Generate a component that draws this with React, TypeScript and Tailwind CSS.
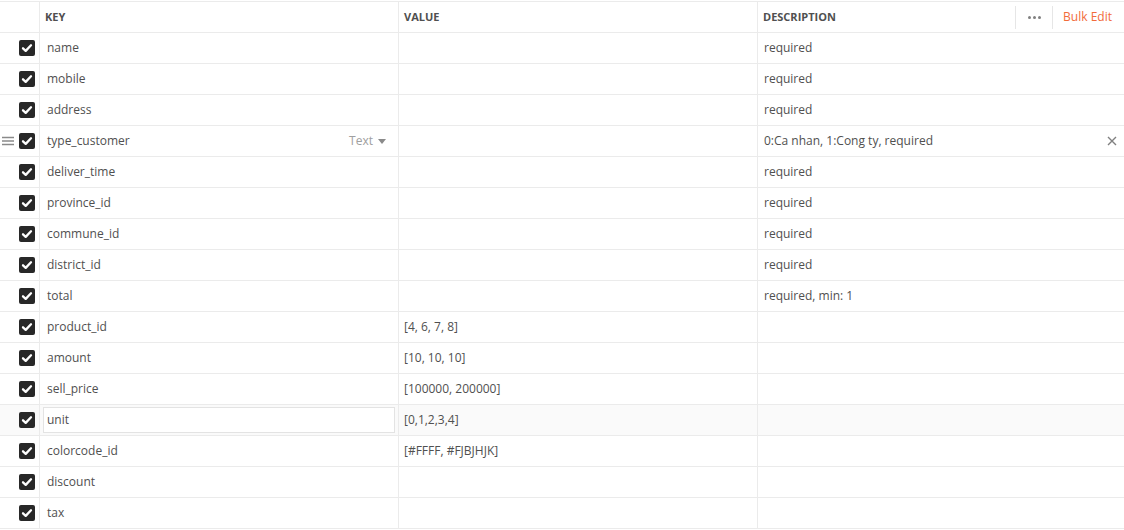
const rows = [
  { key: "name", value: "", desc: "required" },
  { key: "mobile", value: "", desc: "required" },
  { key: "address", value: "", desc: "required" },
  { key: "type_customer", value: "", desc: "0:Ca nhan, 1:Cong ty, required", hover: true },
  { key: "deliver_time", value: "", desc: "required" },
  { key: "province_id", value: "", desc: "required" },
  { key: "commune_id", value: "", desc: "required" },
  { key: "district_id", value: "", desc: "required" },
  { key: "total", value: "", desc: "required, min: 1" },
  { key: "product_id", value: "[4, 6, 7, 8]", desc: "" },
  { key: "amount", value: "[10, 10, 10]", desc: "" },
  { key: "sell_price", value: "[100000, 200000]", desc: "" },
  { key: "unit", value: "[0,1,2,3,4]", desc: "", focus: true },
  { key: "colorcode_id", value: "[#FFFF, #FJBJHJK]", desc: "" },
  { key: "discount", value: "", desc: "" },
  { key: "tax", value: "", desc: "" },
];

function Checkbox() {
  return (
    <div className="w-4 h-4 rounded-[2px] bg-[#282828] flex items-center justify-center">
      <svg width="14" height="14" viewBox="0 0 14 14" fill="none">
        <path d="M3 7.3l2.7 2.6 5.3-5.6" stroke="white" strokeWidth="2.3" strokeLinecap="round" strokeLinejoin="round" />
      </svg>
    </div>
  );
}

export default function App() {
  return (
    <div
      className="w-[1124px] h-[530px] bg-white text-[12px] text-[#505050] overflow-hidden"
      style={{ fontFamily: '"Open Sans", "Noto Sans", sans-serif' }}
    >
      <div className="mt-px border-t border-[#ebebeb]">
        {/* header */}
        <div className="grid grid-cols-[40px_359px_359px_1fr] h-[31px] border-b border-[#ebebeb] text-[11px] font-bold text-[#505050]">
          <div className="border-r border-[#ebebeb]" />
          <div className="border-r border-[#ebebeb] flex items-center pl-[5px]">KEY</div>
          <div className="border-r border-[#ebebeb] flex items-center pl-[5px]">VALUE</div>
          <div className="flex items-center pl-[5px]">
            <span className="flex-1">DESCRIPTION</span>
            <div className="flex items-center h-[23px]">
              <div className="h-full border-l border-[#e6e6e6]" />
              <div className="w-[36px] flex items-center justify-center gap-[2px]">
                <span className="w-[3px] h-[3px] rounded-full bg-[#808080]" />
                <span className="w-[3px] h-[3px] rounded-full bg-[#808080]" />
                <span className="w-[3px] h-[3px] rounded-full bg-[#808080]" />
              </div>
              <div className="h-full border-l border-[#e6e6e6]" />
              <span className="pl-[10px] pr-[12px] text-[12px] font-normal text-[#f26b3a]">Bulk Edit</span>
            </div>
          </div>
        </div>
        {rows.map((r) => (
          <div
            key={r.key}
            className={`grid grid-cols-[40px_359px_359px_1fr] h-[31px] border-b border-[#ebebeb] ${r.focus ? "bg-[#fafafa]" : ""}`}
          >
            <div className="border-r border-[#ebebeb] flex items-center justify-end pr-[4px] relative">
              {r.hover && (
                <svg className="absolute left-[2px] top-[10px]" width="12" height="10" viewBox="0 0 12 10">
                  <path d="M0 1.5h12M0 5h12M0 8.5h12" stroke="#8a8a8a" strokeWidth="1.3" />
                </svg>
              )}
              <Checkbox />
            </div>
            <div className="border-r border-[#ebebeb] flex items-center">
              {r.focus ? (
                <div className="mx-[3px] w-full h-[26px] border border-[#e3e3e3] bg-white flex items-center pl-[3px]">
                  {r.key}
                </div>
              ) : (
                <div className="flex items-center w-full pl-[7px] pr-[12px]">
                  <span className="flex-1">{r.key}</span>
                  {r.hover && (
                    <span className="flex items-center gap-[5px] text-[#a0a0a0]">
                      Text
                      <svg width="8" height="5" viewBox="0 0 8 5">
                        <path d="M0 0h8L4 5z" fill="#8a8a8a" />
                      </svg>
                    </span>
                  )}
                </div>
              )}
            </div>
            <div className="border-r border-[#ebebeb] flex items-center pl-[5px]">{r.value}</div>
            <div className="flex items-center pl-[6px] pr-[7px]">
              <span className="flex-1">{r.desc}</span>
              {r.hover && (
                <svg width="10" height="10" viewBox="0 0 10 10">
                  <path d="M1 1l8 8M9 1l-8 8" stroke="#808080" strokeWidth="1.4" />
                </svg>
              )}
            </div>
          </div>
        ))}
      </div>
    </div>
  );
}
